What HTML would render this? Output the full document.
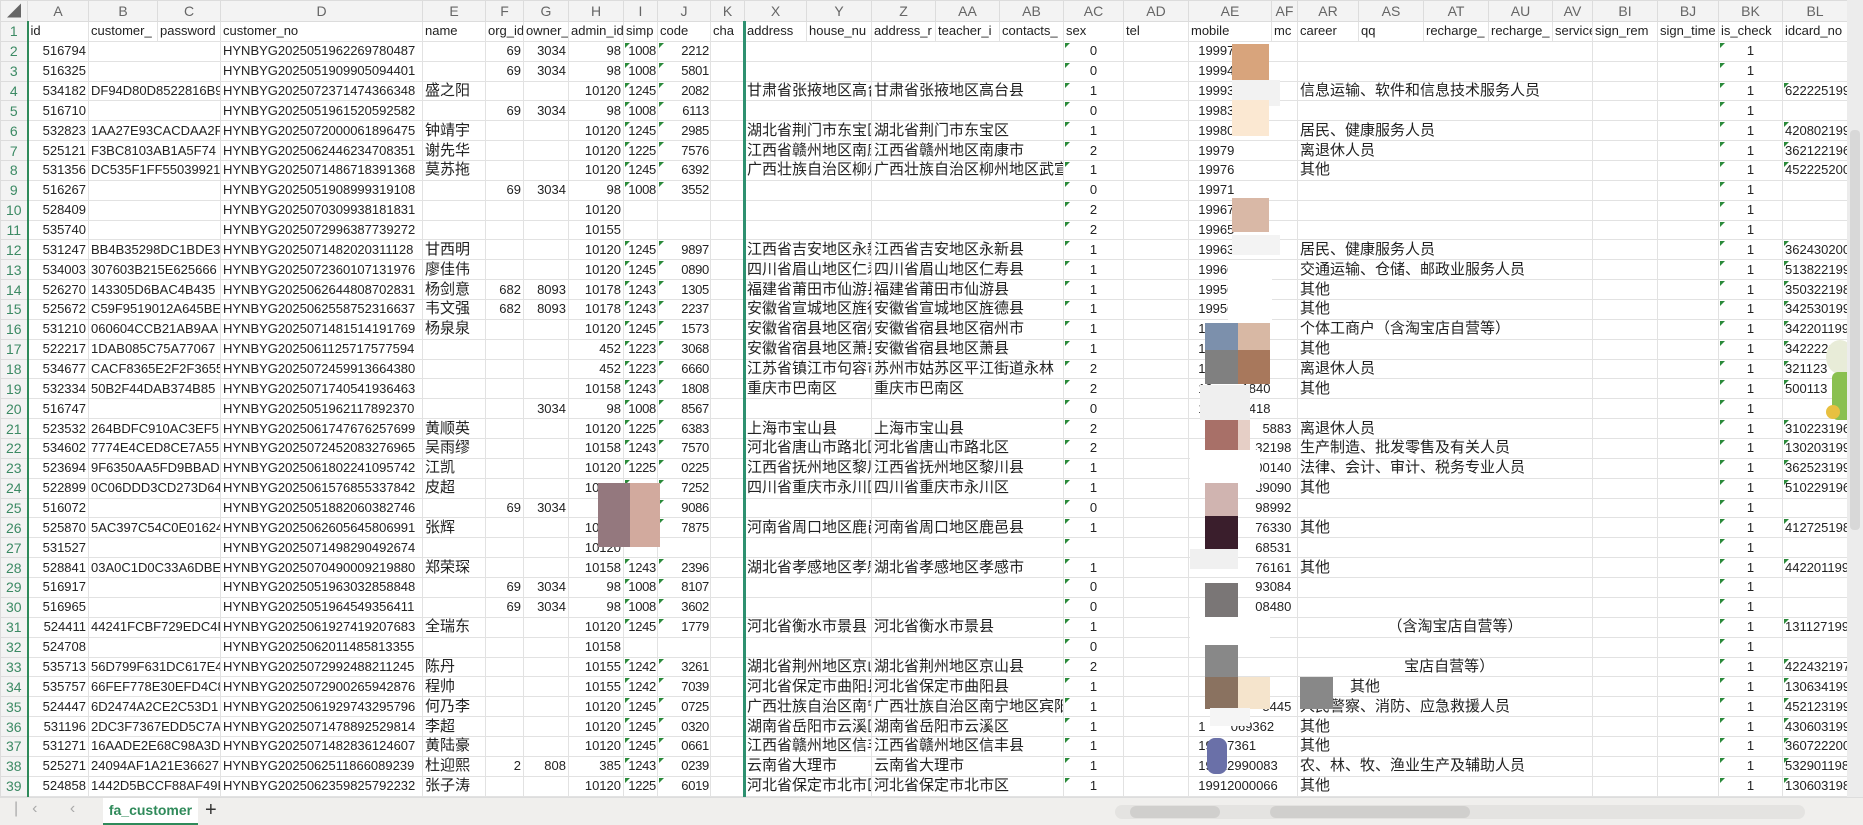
<!DOCTYPE html>
<html><head><meta charset="utf-8"><style>
*{margin:0;padding:0;box-sizing:border-box}
body{width:1863px;height:825px;overflow:hidden;background:#fff;font-family:"Liberation Sans","Noto Sans CJK SC",sans-serif;position:relative}
table{border-collapse:collapse;table-layout:fixed;position:absolute;left:0;top:0;width:1847px}
td,th{border:1px solid #e2e2e2;font-size:13px;color:#222;font-weight:normal;white-space:nowrap;overflow:hidden;padding:0 2px;height:19.87px;line-height:18px;position:relative;text-align:left}
thead th{background:#f3f3f3;color:#666;text-align:center;height:21px;font-size:14px;border-color:#dcdcdc}
tbody th{background:#f3f3f3;color:#3c8a64;text-align:center;font-size:14px;border-color:#dcdcdc;border-right:2px solid #2f8a5a}
.r{text-align:right}.c{text-align:center}
td.t.r{padding:0 1px 0 0;letter-spacing:-0.3px}
.z{font-size:15px}
.t::before{content:"";position:absolute;left:1px;top:1px;border-top:5px solid #2a8a3a;border-right:5px solid transparent}
.b{position:absolute}
</style></head><body>
<table>
<colgroup><col style="width:27px"><col style="width:61px"><col style="width:69px"><col style="width:63px"><col style="width:202px"><col style="width:63px"><col style="width:38px"><col style="width:45px"><col style="width:55px"><col style="width:34px"><col style="width:53px"><col style="width:34px"><col style="width:62px"><col style="width:65px"><col style="width:64px"><col style="width:64px"><col style="width:64px"><col style="width:60px"><col style="width:65px"><col style="width:83px"><col style="width:26px"><col style="width:61px"><col style="width:65px"><col style="width:65px"><col style="width:64px"><col style="width:40px"><col style="width:65px"><col style="width:61px"><col style="width:64px"><col style="width:65px"></colgroup>
<thead><tr><th>◢</th><th>A</th><th>B</th><th>C</th><th>D</th><th>E</th><th>F</th><th>G</th><th>H</th><th>I</th><th>J</th><th>K</th><th>X</th><th>Y</th><th>Z</th><th>AA</th><th>AB</th><th>AC</th><th>AD</th><th>AE</th><th>AF</th><th>AR</th><th>AS</th><th>AT</th><th>AU</th><th>AV</th><th>BI</th><th>BJ</th><th>BK</th><th>BL</th></tr></thead>
<tbody>
<tr><th>1</th><td>id</td><td>customer_</td><td>password</td><td>customer_no</td><td>name</td><td>org_id</td><td>owner_</td><td>admin_id</td><td>simp</td><td>code</td><td>cha</td><td>address</td><td>house_nu</td><td>address_r</td><td>teacher_i</td><td>contacts_</td><td>sex</td><td>tel</td><td>mobile</td><td>mc</td><td>career</td><td>qq</td><td>recharge_</td><td>recharge_</td><td>service</td><td>sign_rem</td><td>sign_time</td><td>is_check</td><td>idcard_no</td></tr>
<tr><th>2</th><td class=r>516794</td><td colspan=2></td><td>HYNBYG2025051962269780487</td><td></td><td class=r>69</td><td class=r>3034</td><td class=r>98</td><td class="r t">1008</td><td class="r t">2212</td><td></td><td colspan=2></td><td colspan=3></td><td class="c t">0</td><td></td><td colspan=2>&nbsp;&nbsp;19997</td><td colspan=5></td><td></td><td></td><td class="c t">1</td><td></td></tr>
<tr><th>3</th><td class=r>516325</td><td colspan=2></td><td>HYNBYG2025051909905094401</td><td></td><td class=r>69</td><td class=r>3034</td><td class=r>98</td><td class="r t">1008</td><td class="r t">5801</td><td></td><td colspan=2></td><td colspan=3></td><td class="c t">0</td><td></td><td colspan=2>&nbsp;&nbsp;19994</td><td colspan=5></td><td></td><td></td><td class="c t">1</td><td></td></tr>
<tr><th>4</th><td class=r>534182</td><td colspan=2>DF94D80D8522816B9</td><td>HYNBYG2025072371474366348</td><td class=z>盛之阳</td><td></td><td></td><td class=r>10120</td><td class="r t">1245</td><td class="r t">2082</td><td></td><td colspan=2 class=z>甘肃省张掖地区高台</td><td colspan=3 class=z>甘肃省张掖地区高台县</td><td class="c t">1</td><td></td><td colspan=2>&nbsp;&nbsp;19993</td><td colspan=5 class=z>信息运输、软件和信息技术服务人员</td><td></td><td></td><td class="c t">1</td><td class=t>622225199</td></tr>
<tr><th>5</th><td class=r>516710</td><td colspan=2></td><td>HYNBYG2025051961520592582</td><td></td><td class=r>69</td><td class=r>3034</td><td class=r>98</td><td class="r t">1008</td><td class="r t">6113</td><td></td><td colspan=2></td><td colspan=3></td><td class="c t">0</td><td></td><td colspan=2>&nbsp;&nbsp;19983</td><td colspan=5></td><td></td><td></td><td class="c t">1</td><td></td></tr>
<tr><th>6</th><td class=r>532823</td><td colspan=2>1AA27E93CACDAA2F</td><td>HYNBYG2025072000061896475</td><td class=z>钟靖宇</td><td></td><td></td><td class=r>10120</td><td class="r t">1245</td><td class="r t">2985</td><td></td><td colspan=2 class=z>湖北省荆门市东宝区</td><td colspan=3 class=z>湖北省荆门市东宝区</td><td class="c t">1</td><td></td><td colspan=2>&nbsp;&nbsp;19980</td><td colspan=5 class=z>居民、健康服务人员</td><td></td><td></td><td class="c t">1</td><td class=t>420802199</td></tr>
<tr><th>7</th><td class=r>525121</td><td colspan=2>F3BC8103AB1A5F74</td><td>HYNBYG2025062446234708351</td><td class=z>谢先华</td><td></td><td></td><td class=r>10120</td><td class="r t">1225</td><td class="r t">7576</td><td></td><td colspan=2 class=z>江西省赣州地区南康</td><td colspan=3 class=z>江西省赣州地区南康市</td><td class="c t">2</td><td></td><td colspan=2>&nbsp;&nbsp;19979</td><td colspan=5 class=z>离退休人员</td><td></td><td></td><td class="c t">1</td><td class=t>362122196</td></tr>
<tr><th>8</th><td class=r>531356</td><td colspan=2>DC535F1FF55039921</td><td>HYNBYG2025071486718391368</td><td class=z>莫苏拖</td><td></td><td></td><td class=r>10120</td><td class="r t">1245</td><td class="r t">6392</td><td></td><td colspan=2 class=z>广西壮族自治区柳州</td><td colspan=3 class=z>广西壮族自治区柳州地区武宣</td><td class="c t">1</td><td></td><td colspan=2>&nbsp;&nbsp;19976</td><td colspan=5 class=z>其他</td><td></td><td></td><td class="c t">1</td><td class=t>452225200</td></tr>
<tr><th>9</th><td class=r>516267</td><td colspan=2></td><td>HYNBYG2025051908999319108</td><td></td><td class=r>69</td><td class=r>3034</td><td class=r>98</td><td class="r t">1008</td><td class="r t">3552</td><td></td><td colspan=2></td><td colspan=3></td><td class="c t">0</td><td></td><td colspan=2>&nbsp;&nbsp;19971</td><td colspan=5></td><td></td><td></td><td class="c t">1</td><td></td></tr>
<tr><th>10</th><td class=r>528409</td><td colspan=2></td><td>HYNBYG2025070309938181831</td><td></td><td></td><td></td><td class=r>10120</td><td></td><td></td><td></td><td colspan=2></td><td colspan=3></td><td class="c t">2</td><td></td><td colspan=2>&nbsp;&nbsp;19967</td><td colspan=5></td><td></td><td></td><td class="c t">1</td><td></td></tr>
<tr><th>11</th><td class=r>535740</td><td colspan=2></td><td>HYNBYG2025072996387739272</td><td></td><td></td><td></td><td class=r>10155</td><td></td><td></td><td></td><td colspan=2></td><td colspan=3></td><td class="c t">2</td><td></td><td colspan=2>&nbsp;&nbsp;19965</td><td colspan=5></td><td></td><td></td><td class="c t">1</td><td></td></tr>
<tr><th>12</th><td class=r>531247</td><td colspan=2>BB4B35298DC1BDE3</td><td>HYNBYG2025071482020311128</td><td class=z>甘西明</td><td></td><td></td><td class=r>10120</td><td class="r t">1245</td><td class="r t">9897</td><td></td><td colspan=2 class=z>江西省吉安地区永新</td><td colspan=3 class=z>江西省吉安地区永新县</td><td class="c t">1</td><td></td><td colspan=2>&nbsp;&nbsp;19963</td><td colspan=5 class=z>居民、健康服务人员</td><td></td><td></td><td class="c t">1</td><td class=t>362430200</td></tr>
<tr><th>13</th><td class=r>534003</td><td colspan=2>307603B215E625666</td><td>HYNBYG2025072360107131976</td><td class=z>廖佳伟</td><td></td><td></td><td class=r>10120</td><td class="r t">1245</td><td class="r t">0890</td><td></td><td colspan=2 class=z>四川省眉山地区仁寿</td><td colspan=3 class=z>四川省眉山地区仁寿县</td><td class="c t">1</td><td></td><td colspan=2>&nbsp;&nbsp;19960</td><td colspan=5 class=z>交通运输、仓储、邮政业服务人员</td><td></td><td></td><td class="c t">1</td><td class=t>513822199</td></tr>
<tr><th>14</th><td class=r>526270</td><td colspan=2>143305D6BAC4B435</td><td>HYNBYG2025062644808702831</td><td class=z>杨剑意</td><td class=r>682</td><td class=r>8093</td><td class=r>10178</td><td class="r t">1243</td><td class="r t">1305</td><td></td><td colspan=2 class=z>福建省莆田市仙游县</td><td colspan=3 class=z>福建省莆田市仙游县</td><td class="c t">1</td><td></td><td colspan=2>&nbsp;&nbsp;19950</td><td colspan=5 class=z>其他</td><td></td><td></td><td class="c t">1</td><td class=t>350322198</td></tr>
<tr><th>15</th><td class=r>525672</td><td colspan=2>C59F9519012A645BE</td><td>HYNBYG2025062558752316637</td><td class=z>韦文强</td><td class=r>682</td><td class=r>8093</td><td class=r>10178</td><td class="r t">1243</td><td class="r t">2237</td><td></td><td colspan=2 class=z>安徽省宣城地区旌德</td><td colspan=3 class=z>安徽省宣城地区旌德县</td><td class="c t">1</td><td></td><td colspan=2>&nbsp;&nbsp;19950</td><td colspan=5 class=z>其他</td><td></td><td></td><td class="c t">1</td><td class=t>342530199</td></tr>
<tr><th>16</th><td class=r>531210</td><td colspan=2>060604CCB21AB9AA</td><td>HYNBYG2025071481514191769</td><td class=z>杨泉泉</td><td></td><td></td><td class=r>10120</td><td class="r t">1245</td><td class="r t">1573</td><td></td><td colspan=2 class=z>安徽省宿县地区宿州</td><td colspan=3 class=z>安徽省宿县地区宿州市</td><td class="c t">1</td><td></td><td colspan=2>&nbsp;&nbsp;19951&nbsp;&nbsp;&nbsp;&nbsp;&nbsp;&nbsp;51</td><td colspan=5 class=z>个体工商户（含淘宝店自营等）</td><td></td><td></td><td class="c t">1</td><td class=t>342201199</td></tr>
<tr><th>17</th><td class=r>522217</td><td colspan=2>1DAB085C75A77067</td><td>HYNBYG2025061125717577594</td><td></td><td></td><td></td><td class=r>452</td><td class="r t">1223</td><td class="r t">3068</td><td></td><td colspan=2 class=z>安徽省宿县地区萧县</td><td colspan=3 class=z>安徽省宿县地区萧县</td><td class="c t">1</td><td></td><td colspan=2>&nbsp;&nbsp;19960</td><td colspan=5 class=z>其他</td><td></td><td></td><td class="c t">1</td><td class=t>342222199</td></tr>
<tr><th>18</th><td class=r>534677</td><td colspan=2>CACF8365E2F2F3655</td><td>HYNBYG2025072459913664380</td><td></td><td></td><td></td><td class=r>452</td><td class="r t">1223</td><td class="r t">6660</td><td></td><td colspan=2 class=z>江苏省镇江市句容市</td><td colspan=3 class=z>苏州市姑苏区平江街道永林</td><td class="c t">2</td><td></td><td colspan=2>&nbsp;&nbsp;19934</td><td colspan=5 class=z>离退休人员</td><td></td><td></td><td class="c t">1</td><td class=t>321123</td></tr>
<tr><th>19</th><td class=r>532334</td><td colspan=2>50B2F44DAB374B85</td><td>HYNBYG2025071740541936463</td><td></td><td></td><td></td><td class=r>10158</td><td class="r t">1243</td><td class="r t">1808</td><td></td><td colspan=2 class=z>重庆市巴南区</td><td colspan=3 class=z>重庆市巴南区</td><td class="c t">2</td><td></td><td colspan=2>&nbsp;&nbsp;19&nbsp;&nbsp;&nbsp;&nbsp;&nbsp;&nbsp;&nbsp;&nbsp;1840</td><td colspan=5 class=z>其他</td><td></td><td></td><td class="c t">1</td><td class=t>500113</td></tr>
<tr><th>20</th><td class=r>516747</td><td colspan=2></td><td>HYNBYG2025051962117892370</td><td></td><td></td><td class=r>3034</td><td class=r>98</td><td class="r t">1008</td><td class="r t">8567</td><td></td><td colspan=2></td><td colspan=3></td><td class="c t">0</td><td></td><td colspan=2>&nbsp;&nbsp;1&nbsp;&nbsp;&nbsp;&nbsp;&nbsp;&nbsp;&nbsp;&nbsp;&nbsp;&nbsp;5418</td><td colspan=5></td><td></td><td></td><td class="c t">1</td><td></td></tr>
<tr><th>21</th><td class=r>523532</td><td colspan=2>264BDFC910AC3EF5</td><td>HYNBYG2025061747676257699</td><td class=z>黄顺英</td><td></td><td></td><td class=r>10120</td><td class="r t">1225</td><td class="r t">6383</td><td></td><td colspan=2 class=z>上海市宝山县</td><td colspan=3 class=z>上海市宝山县</td><td class="c t">2</td><td></td><td colspan=2 class=r>5883&nbsp;</td><td colspan=5 class=z>离退休人员</td><td></td><td></td><td class="c t">1</td><td class=t>310223196</td></tr>
<tr><th>22</th><td class=r>534602</td><td colspan=2>7774E4CED8CE7A55</td><td>HYNBYG2025072452083276965</td><td class=z>吴雨缪</td><td></td><td></td><td class=r>10158</td><td class="r t">1243</td><td class="r t">7570</td><td></td><td colspan=2 class=z>河北省唐山市路北区</td><td colspan=3 class=z>河北省唐山市路北区</td><td class="c t">2</td><td></td><td colspan=2 class=r>32198&nbsp;</td><td colspan=5 class=z>生产制造、批发零售及有关人员</td><td></td><td></td><td class="c t">1</td><td class=t>130203199</td></tr>
<tr><th>23</th><td class=r>523694</td><td colspan=2>9F6350AA5FD9BBAD</td><td>HYNBYG2025061802241095742</td><td class=z>江凯</td><td></td><td></td><td class=r>10120</td><td class="r t">1225</td><td class="r t">0225</td><td></td><td colspan=2 class=z>江西省抚州地区黎川</td><td colspan=3 class=z>江西省抚州地区黎川县</td><td class="c t">1</td><td></td><td colspan=2 class=r>00140&nbsp;</td><td colspan=5 class=z>法律、会计、审计、税务专业人员</td><td></td><td></td><td class="c t">1</td><td class=t>362523199</td></tr>
<tr><th>24</th><td class=r>522899</td><td colspan=2>0C06DDD3CD273D64</td><td>HYNBYG2025061576855337842</td><td class=z>皮超</td><td></td><td></td><td class=r>10120</td><td class="r t">1225</td><td class="r t">7252</td><td></td><td colspan=2 class=z>四川省重庆市永川区</td><td colspan=3 class=z>四川省重庆市永川区</td><td class="c t">1</td><td></td><td colspan=2 class=r>39090&nbsp;</td><td colspan=5 class=z>其他</td><td></td><td></td><td class="c t">1</td><td class=t>510229196</td></tr>
<tr><th>25</th><td class=r>516072</td><td colspan=2></td><td>HYNBYG2025051882060382746</td><td></td><td class=r>69</td><td class=r>3034</td><td></td><td></td><td class="r t">9086</td><td></td><td colspan=2></td><td colspan=3></td><td class="c t">0</td><td></td><td colspan=2 class=r>98992&nbsp;</td><td colspan=5></td><td></td><td></td><td class="c t">1</td><td></td></tr>
<tr><th>26</th><td class=r>525870</td><td colspan=2>5AC397C54C0E01624</td><td>HYNBYG2025062605645806991</td><td class=z>张辉</td><td></td><td></td><td class=r>10120</td><td></td><td class="r t">7875</td><td></td><td colspan=2 class=z>河南省周口地区鹿邑</td><td colspan=3 class=z>河南省周口地区鹿邑县</td><td class="c t">1</td><td></td><td colspan=2 class=r>76330&nbsp;</td><td colspan=5 class=z>其他</td><td></td><td></td><td class="c t">1</td><td class=t>412725198</td></tr>
<tr><th>27</th><td class=r>531527</td><td colspan=2></td><td>HYNBYG2025071498290492674</td><td></td><td></td><td></td><td class=r>10120</td><td></td><td></td><td></td><td colspan=2></td><td colspan=3></td><td class="c t"></td><td></td><td colspan=2 class=r>68531&nbsp;</td><td colspan=5></td><td></td><td></td><td class="c t">1</td><td></td></tr>
<tr><th>28</th><td class=r>528841</td><td colspan=2>03A0C1D0C33A6DBE</td><td>HYNBYG2025070490009219880</td><td class=z>郑荣琛</td><td></td><td></td><td class=r>10158</td><td class="r t">1243</td><td class="r t">2396</td><td></td><td colspan=2 class=z>湖北省孝感地区孝感</td><td colspan=3 class=z>湖北省孝感地区孝感市</td><td class="c t">1</td><td></td><td colspan=2 class=r>76161&nbsp;</td><td colspan=5 class=z>其他</td><td></td><td></td><td class="c t">1</td><td class=t>442201199</td></tr>
<tr><th>29</th><td class=r>516917</td><td colspan=2></td><td>HYNBYG2025051963032858848</td><td></td><td class=r>69</td><td class=r>3034</td><td class=r>98</td><td class="r t">1008</td><td class="r t">8107</td><td></td><td colspan=2></td><td colspan=3></td><td class="c t">0</td><td></td><td colspan=2 class=r>93084&nbsp;</td><td colspan=5></td><td></td><td></td><td class="c t">1</td><td></td></tr>
<tr><th>30</th><td class=r>516965</td><td colspan=2></td><td>HYNBYG2025051964549356411</td><td></td><td class=r>69</td><td class=r>3034</td><td class=r>98</td><td class="r t">1008</td><td class="r t">3602</td><td></td><td colspan=2></td><td colspan=3></td><td class="c t">0</td><td></td><td colspan=2 class=r>08480&nbsp;</td><td colspan=5></td><td></td><td></td><td class="c t">1</td><td></td></tr>
<tr><th>31</th><td class=r>524411</td><td colspan=2>44241FCBF729EDC4F</td><td>HYNBYG2025061927419207683</td><td class=z>全瑞东</td><td></td><td></td><td class=r>10120</td><td class="r t">1245</td><td class="r t">1779</td><td></td><td colspan=2 class=z>河北省衡水市景县</td><td colspan=3 class=z>河北省衡水市景县</td><td class="c t">1</td><td></td><td colspan=2></td><td colspan=5 class=z>&nbsp;&nbsp;&nbsp;&nbsp;&nbsp;&nbsp;&nbsp;&nbsp;&nbsp;&nbsp;&nbsp;&nbsp;&nbsp;&nbsp;&nbsp;&nbsp;&nbsp;&nbsp;&nbsp;&nbsp;&nbsp;（含淘宝店自营等）</td><td></td><td></td><td class="c t">1</td><td class=t>131127199</td></tr>
<tr><th>32</th><td class=r>524708</td><td colspan=2></td><td>HYNBYG2025062011485813355</td><td></td><td></td><td></td><td class=r>10158</td><td></td><td></td><td></td><td colspan=2></td><td colspan=3></td><td class="c t">0</td><td></td><td colspan=2></td><td colspan=5></td><td></td><td></td><td class="c t">1</td><td></td></tr>
<tr><th>33</th><td class=r>535713</td><td colspan=2>56D799F631DC617E4</td><td>HYNBYG2025072992488211245</td><td class=z>陈丹</td><td></td><td></td><td class=r>10155</td><td class="r t">1242</td><td class="r t">3261</td><td></td><td colspan=2 class=z>湖北省荆州地区京山</td><td colspan=3 class=z>湖北省荆州地区京山县</td><td class="c t">2</td><td></td><td colspan=2></td><td colspan=5 class=z>&nbsp;&nbsp;&nbsp;&nbsp;&nbsp;&nbsp;&nbsp;&nbsp;&nbsp;&nbsp;&nbsp;&nbsp;&nbsp;&nbsp;&nbsp;&nbsp;&nbsp;&nbsp;&nbsp;&nbsp;&nbsp;&nbsp;&nbsp;&nbsp;&nbsp;宝店自营等）</td><td></td><td></td><td class="c t">1</td><td class=t>422432197</td></tr>
<tr><th>34</th><td class=r>535757</td><td colspan=2>66FEF778E30EFD4C8</td><td>HYNBYG2025072900265942876</td><td class=z>程帅</td><td></td><td></td><td class=r>10155</td><td class="r t">1242</td><td class="r t">7039</td><td></td><td colspan=2 class=z>河北省保定市曲阳县</td><td colspan=3 class=z>河北省保定市曲阳县</td><td class="c t">1</td><td></td><td colspan=2></td><td colspan=5 class=z>&nbsp;&nbsp;&nbsp;&nbsp;&nbsp;&nbsp;&nbsp;&nbsp;&nbsp;&nbsp;&nbsp;&nbsp;其他</td><td></td><td></td><td class="c t">1</td><td class=t>130634199</td></tr>
<tr><th>35</th><td class=r>524447</td><td colspan=2>6D2474A2CE2C53D1</td><td>HYNBYG2025061929743295796</td><td class=z>何乃李</td><td></td><td></td><td class=r>10120</td><td class="r t">1245</td><td class="r t">0725</td><td></td><td colspan=2 class=z>广西壮族自治区南宁</td><td colspan=3 class=z>广西壮族自治区南宁地区宾阳</td><td class="c t">1</td><td></td><td colspan=2 class=r>5445&nbsp;</td><td colspan=5 class=z>人民警察、消防、应急救援人员</td><td></td><td></td><td class="c t">1</td><td class=t>452123199</td></tr>
<tr><th>36</th><td class=r>531196</td><td colspan=2>2DC3F7367EDD5C7A</td><td>HYNBYG2025071478892529814</td><td class=z>李超</td><td></td><td></td><td class=r>10120</td><td class="r t">1245</td><td class="r t">0320</td><td></td><td colspan=2 class=z>湖南省岳阳市云溪区</td><td colspan=3 class=z>湖南省岳阳市云溪区</td><td class="c t">1</td><td></td><td colspan=2>&nbsp;&nbsp;1&nbsp;&nbsp;&nbsp;&nbsp;&nbsp;&nbsp;&nbsp;069362</td><td colspan=5 class=z>其他</td><td></td><td></td><td class="c t">1</td><td class=t>430603199</td></tr>
<tr><th>37</th><td class=r>531271</td><td colspan=2>16AADE2E68C98A3D</td><td>HYNBYG2025071482836124607</td><td class=z>黄陆豪</td><td></td><td></td><td class=r>10120</td><td class="r t">1245</td><td class="r t">0661</td><td></td><td colspan=2 class=z>江西省赣州地区信丰</td><td colspan=3 class=z>江西省赣州地区信丰县</td><td class="c t">1</td><td></td><td colspan=2>&nbsp;&nbsp;19997361</td><td colspan=5 class=z>其他</td><td></td><td></td><td class="c t">1</td><td class=t>360722200</td></tr>
<tr><th>38</th><td class=r>525271</td><td colspan=2>24094AF1A21E36627</td><td>HYNBYG2025062511866089239</td><td class=z>杜迎熙</td><td class=r>2</td><td class=r>808</td><td class=r>385</td><td class="r t">1243</td><td class="r t">0239</td><td></td><td colspan=2 class=z>云南省大理市</td><td colspan=3 class=z>云南省大理市</td><td class="c t">1</td><td></td><td colspan=2>&nbsp;&nbsp;19912990083</td><td colspan=5 class=z>农、林、牧、渔业生产及辅助人员</td><td></td><td></td><td class="c t">1</td><td class=t>532901198</td></tr>
<tr><th>39</th><td class=r>524858</td><td colspan=2>1442D5BCCF88AF49E</td><td>HYNBYG2025062359825792232</td><td class=z>张子涛</td><td></td><td></td><td class=r>10120</td><td class="r t">1225</td><td class="r t">6019</td><td></td><td colspan=2 class=z>河北省保定市北市区</td><td colspan=3 class=z>河北省保定市北市区</td><td class="c t">1</td><td></td><td colspan=2>&nbsp;&nbsp;19912000066</td><td colspan=5 class=z>其他</td><td></td><td></td><td class="c t">1</td><td class=t>130603198</td></tr>
</tbody></table>
<div class=b style="left:743px;top:21px;width:3px;height:776px;background:#2e9070"></div>
<div class=b style="left:1232px;top:44px;width:37px;height:36px;background:#d8a47c"></div>
<div class=b style="left:1232px;top:80px;width:48px;height:26px;background:#f2f2f2"></div>
<div class=b style="left:1232px;top:100px;width:37px;height:36px;background:#fbe8d2"></div>
<div class=b style="left:1232px;top:198px;width:37px;height:34px;background:#d9b8a6"></div>
<div class=b style="left:1232px;top:235px;width:48px;height:20px;background:#f3f3f3"></div>
<div class=b style="left:1228px;top:262px;width:44px;height:60px;background:#fff"></div>
<div class=b style="left:1205px;top:323px;width:33px;height:36px;background:#7c90ac"></div>
<div class=b style="left:1238px;top:323px;width:32px;height:36px;background:#d8b8a4"></div>
<div class=b style="left:1205px;top:350px;width:33px;height:34px;background:#808080"></div>
<div class=b style="left:1238px;top:350px;width:32px;height:34px;background:#a8785c"></div>
<div class=b style="left:1200px;top:385px;width:50px;height:35px;background:#efefef"></div>
<div class=b style="left:1205px;top:420px;width:33px;height:30px;background:#a87068"></div>
<div class=b style="left:1238px;top:420px;width:12px;height:30px;background:#e6cfc6"></div>
<div class=b style="left:1190px;top:450px;width:70px;height:40px;background:#fff"></div>
<div class=b style="left:1205px;top:483px;width:33px;height:33px;background:#d0b4b0"></div>
<div class=b style="left:1205px;top:516px;width:33px;height:33px;background:#3a1e2c"></div>
<div class=b style="left:1190px;top:549px;width:48px;height:20px;background:#f0f0f0"></div>
<div class=b style="left:1205px;top:583px;width:33px;height:34px;background:#7a7676"></div>
<div class=b style="left:1190px;top:617px;width:80px;height:28px;background:#fff"></div>
<div class=b style="left:1205px;top:645px;width:33px;height:32px;background:#888"></div>
<div class=b style="left:1205px;top:677px;width:33px;height:32px;background:#8a7260"></div>
<div class=b style="left:1238px;top:677px;width:32px;height:32px;background:#f5e4cc"></div>
<div class=b style="left:1300px;top:677px;width:33px;height:32px;background:#888"></div>
<div class=b style="left:1210px;top:708px;width:40px;height:18px;background:#f5f5f5"></div>
<div class=b style="left:1207px;top:738px;width:20px;height:36px;background:#6a70a8;border-radius:8px"></div>
<div class=b style="left:598px;top:483px;width:32px;height:64px;background:#94787e"></div>
<div class=b style="left:630px;top:483px;width:30px;height:64px;background:#d2aa9e"></div>
<div class=b style="left:1826px;top:340px;width:28px;height:34px;background:#e8ecd8;border-radius:50%"></div>
<div class=b style="left:1832px;top:372px;width:22px;height:48px;background:#8ac050;border-radius:6px"></div>
<div class=b style="left:1826px;top:405px;width:14px;height:14px;background:#e8c040;border-radius:50%"></div>
<div class=b style="left:1847px;top:0;width:16px;height:798px;background:#ececec"></div>
<div class=b style="left:1850px;top:130px;width:10px;height:400px;background:#d8d8d8;border-radius:4px"></div>
<div class=b style="left:0;top:797px;width:1863px;height:28px;background:#f0efed;border-top:1px solid #ddd"></div>
<div class=b style="left:14px;top:800px;font-size:16px;color:#aaa;letter-spacing:14px">|‹ ‹ › ›|</div>
<div class=b style="left:103px;top:798px;width:95px;height:27px;background:#fff;color:#2f8a5a;font-size:14px;font-weight:bold;text-align:center;line-height:24px;border-bottom:2px solid #2f8a5a">fa_customer</div>
<div class=b style="left:205px;top:799px;font-size:20px;color:#333">+</div>
<div class=b style="left:1115px;top:805px;width:690px;height:14px;background:#e4e3e1;border-radius:7px"></div>
<div class=b style="left:1130px;top:806px;width:90px;height:12px;background:#d0cfcd;border-radius:6px"></div>
<div class=b style="left:1270px;top:806px;width:200px;height:12px;background:#d0cfcd;border-radius:6px"></div>
</body></html>
